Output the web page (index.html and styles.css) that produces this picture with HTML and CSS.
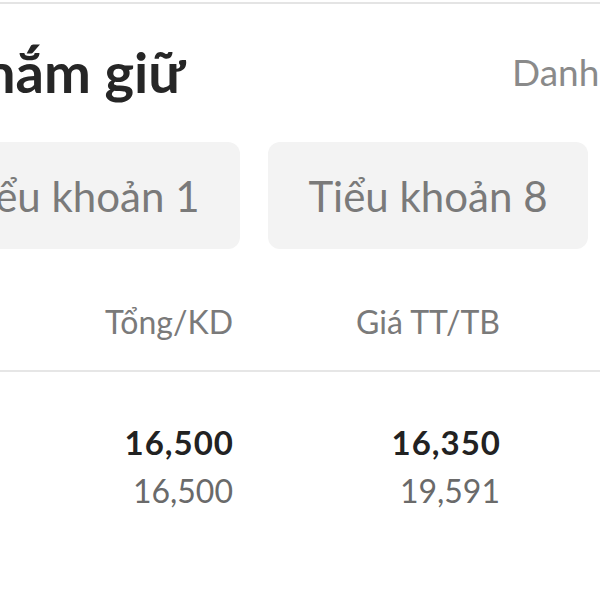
FILE: index.html
```html
<!DOCTYPE html>
<html lang="vi">
<head>
<meta charset="utf-8">
<link rel="stylesheet" href="styles.css">
</head>
<body>
<div class="screen">
  <div class="topline"></div>
  <div class="title-row">
    <div class="title-wrap"><h1 class="title">Danh mục nắm giữ</h1></div>
    <div class="link">Danh sách quan tâm</div>
  </div>
  <div class="tabs">
    <div class="tab">Tiểu khoản 1</div>
    <div class="tab">Tiểu khoản 8</div>
  </div>
  <div class="thead">
    <div class="th">Tổng/KD</div>
    <div class="th">Giá TT/TB</div>
  </div>
  <div class="row">
    <div class="cell"><div class="main">16,500</div><div class="sub">16,500</div></div>
    <div class="cell"><div class="main">16,350</div><div class="sub">19,591</div></div>
  </div>
</div>
</body>
</html>
```
FILE: styles.css
```css
html, body {
  margin: 0;
  padding: 0;
  background: #ffffff;
  overflow: hidden;
}
body {
  font-family: "Lato", "Liberation Sans", sans-serif;
  width: 600px;
  height: 600px;
}
.screen {
  width: 600px;
  height: 600px;
  overflow: hidden;
}
.topline {
  height: 2px;
  margin-top: 2px;
  background: #e4e4e4;
}
.title-row {
  display: flex;
  align-items: center;
  gap: 327px;
  height: 142px;
  margin-top: -4px;
  white-space: nowrap;
}
.title-wrap {
  width: 185px;
  flex-shrink: 0;
  display: flex;
  justify-content: flex-end;
}
.title {
  margin: 0;
  font-size: 56px;
  font-weight: 700;
  color: #262626;
  white-space: nowrap;
}
.link {
  flex-shrink: 0;
  font-size: 37px;
  color: #8a8a8a;
}
.tabs {
  display: flex;
  justify-content: flex-end;
  gap: 28px;
  padding-right: 12px;
}
.tab {
  flex: 0 0 320px;
  height: 107px;
  border-radius: 12px;
  background: #f3f3f3;
  color: #7a7a7a;
  font-size: 42px;
  display: flex;
  align-items: center;
  justify-content: center;
  white-space: nowrap;
}
.thead {
  display: grid;
  grid-template-columns: 233px 267px;
  justify-items: end;
  padding-top: 49px;
  height: 72px;
  border-bottom: 2px solid #e6e6e6;
}
.th {
  font-size: 32px;
  line-height: 48px;
  color: #7a7a7a;
}
.row {
  display: grid;
  grid-template-columns: 233px 267px;
  justify-items: end;
  padding-top: 50px;
}
.cell {
  text-align: right;
}
.main {
  font-size: 33px;
  font-weight: 700;
  letter-spacing: 1px;
  margin-right: -1px;
  color: #222222;
  line-height: 40px;
}
.sub {
  font-size: 32px;
  color: #6a6a6a;
  line-height: 58px;
}
```
